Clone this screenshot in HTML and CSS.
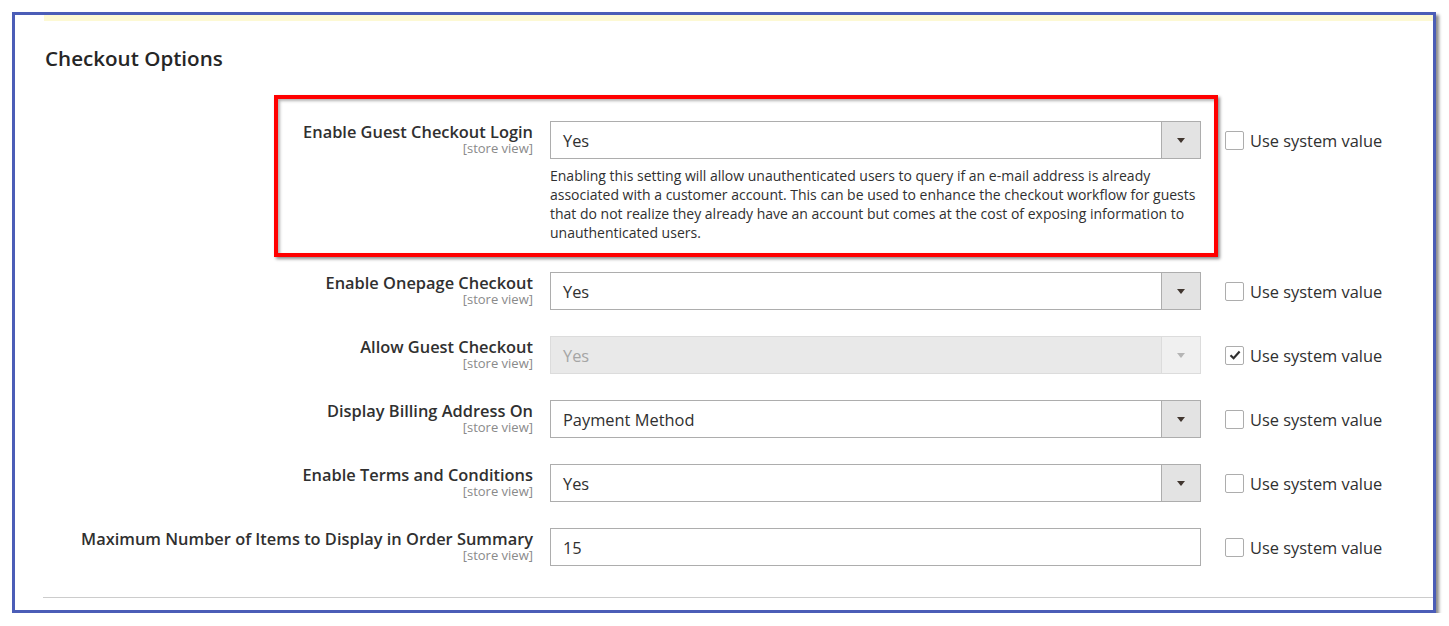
FILE: index.html
```html
<!DOCTYPE html>
<html lang="en">
<head>
    <meta charset="UTF-8">
    <meta name="viewport" content="width=device-width, initial-scale=1.0">
    <title>Checkout Options</title>
    <link rel="stylesheet" href="styles.css">
</head>
<body>
    <div class="frame">
        <div class="notice-strip"></div>
        <section class="section">
            <h2 class="section-title">Checkout Options</h2>
            <div class="fields">
                <div class="field field-first">
                    <div class="field-label">
                        <span class="label-text">Enable Guest Checkout Login</span>
                        <span class="scope">[store view]</span>
                    </div>
                    <div class="field-control">
                        <div class="select"><span class="select-value">Yes</span><span class="select-arrow"></span></div>
                        <p class="note">Enabling this setting will allow unauthenticated users to query if an e-mail address is already<br>associated with a customer account. This can be used to enhance the checkout workflow for guests<br>that do not realize they already have an account but comes at the cost of exposing information to<br>unauthenticated users.</p>
                    </div>
                    <label class="use-default"><span class="checkbox"></span>Use system value</label>
                    <span class="highlight-box"></span>
                </div>

                <div class="field">
                    <div class="field-label">
                        <span class="label-text">Enable Onepage Checkout</span>
                        <span class="scope">[store view]</span>
                    </div>
                    <div class="field-control">
                        <div class="select"><span class="select-value">Yes</span><span class="select-arrow"></span></div>
                    </div>
                    <label class="use-default"><span class="checkbox"></span>Use system value</label>
                </div>

                <div class="field">
                    <div class="field-label">
                        <span class="label-text">Allow Guest Checkout</span>
                        <span class="scope">[store view]</span>
                    </div>
                    <div class="field-control">
                        <div class="select disabled"><span class="select-value">Yes</span><span class="select-arrow"></span></div>
                    </div>
                    <label class="use-default"><span class="checkbox checked"><svg width="14" height="14" viewBox="0 0 14 14"><path d="M2.5 7.2 L5.6 10.2 L11.6 3.6" fill="none" stroke="#303030" stroke-width="2.2"/></svg></span>Use system value</label>
                </div>

                <div class="field">
                    <div class="field-label">
                        <span class="label-text">Display Billing Address On</span>
                        <span class="scope">[store view]</span>
                    </div>
                    <div class="field-control">
                        <div class="select"><span class="select-value">Payment Method</span><span class="select-arrow"></span></div>
                    </div>
                    <label class="use-default"><span class="checkbox"></span>Use system value</label>
                </div>

                <div class="field">
                    <div class="field-label">
                        <span class="label-text">Enable Terms and Conditions</span>
                        <span class="scope">[store view]</span>
                    </div>
                    <div class="field-control">
                        <div class="select"><span class="select-value">Yes</span><span class="select-arrow"></span></div>
                    </div>
                    <label class="use-default"><span class="checkbox"></span>Use system value</label>
                </div>

                <div class="field field-last">
                    <div class="field-label">
                        <span class="label-text">Maximum Number of Items to Display in Order Summary</span>
                        <span class="scope">[store view]</span>
                    </div>
                    <div class="field-control">
                        <div class="text-input">15</div>
                    </div>
                    <label class="use-default"><span class="checkbox"></span>Use system value</label>
                </div>
            </div>
        </section>
        <div class="section-rule"></div>
    </div>
</body>
</html>
```

FILE: styles.css
```css
body {
    margin: 0;
    background: #ffffff;
    font-family: "Open Sans", "Liberation Sans", sans-serif;
    color: #303030;
}
.frame {
    box-sizing: border-box;
    width: 1424px;
    height: 601px;
    margin: 12px 0 0 12px;
    border: 3px solid #4b5db7;
    box-shadow: 3px 3px 3px rgba(0, 0, 0, 0.45);
    overflow: hidden;
}
.notice-strip {
    height: 6px;
    margin-left: 29px;
    background: #fdf9d3;
}
.section {
    padding-left: 30px;
}
.section-title {
    margin: 25px 0 0;
    font-size: 20.6px;
    line-height: 24px;
    font-weight: 600;
    color: #262626;
}
.fields {
    padding-top: 51px;
}
.field {
    position: relative;
    display: grid;
    grid-template-columns: 488px 668px auto;
    align-items: start;
    margin-bottom: 26px;
}
.field-first {
    margin-bottom: 30px;
}
.field-last {
    margin-bottom: 0;
}
.field-label {
    display: flex;
    flex-direction: column;
    align-items: flex-end;
    text-align: right;
    padding-top: 1px;
}
.label-text {
    font-size: 16.4px;
    line-height: 19px;
    font-weight: 600;
}
.scope {
    font-size: 13px;
    line-height: 14px;
    color: #8a8a8a;
}
.field-control {
    margin-left: 17px;
}
.select,
.text-input {
    box-sizing: border-box;
    display: flex;
    align-items: center;
    height: 38px;
    border: 1px solid #adadad;
    background: #ffffff;
    font-size: 16.4px;
}
.select-value,
.text-input {
    padding-left: 12px;
}
.select-value {
    flex: 1;
}
.select-arrow {
    position: relative;
    align-self: stretch;
    width: 38px;
    border-left: 1px solid #adadad;
    background: #e3e3e3;
}
.select-arrow::after {
    content: "";
    position: absolute;
    left: 15px;
    top: 16px;
    border-left: 4.5px solid transparent;
    border-right: 4.5px solid transparent;
    border-top: 5px solid #41362f;
}
.select.disabled {
    border-color: #dcdcdc;
    background: #e9e9e9;
    color: #a5a5a5;
}
.select.disabled .select-arrow {
    border-left-color: #dcdcdc;
    background: #f0f0f0;
}
.select.disabled .select-arrow::after {
    border-top-color: #b5b5b5;
}
.note {
    margin: 7px 0 0;
    font-size: 14px;
    line-height: 19px;
}
.use-default {
    display: flex;
    align-items: center;
    gap: 6px;
    height: 38px;
    margin-left: 24px;
    font-size: 16.4px;
    white-space: nowrap;
}
.checkbox {
    box-sizing: border-box;
    display: flex;
    align-items: center;
    justify-content: center;
    width: 19px;
    height: 19px;
    border: 1px solid #adadad;
    border-radius: 2px;
    background: #ffffff;
}
.highlight-box {
    position: absolute;
    left: 229px;
    top: -26px;
    width: 944px;
    height: 162px;
    box-sizing: border-box;
    border: 4px solid #ff0000;
    box-shadow: 2px 2px 3px rgba(0, 0, 0, 0.45), inset 2px 2px 3px rgba(0, 0, 0, 0.3);
    pointer-events: none;
}
.section-rule {
    height: 1px;
    margin: 31px 0 0 28px;
    background: #cccccc;
}
```
